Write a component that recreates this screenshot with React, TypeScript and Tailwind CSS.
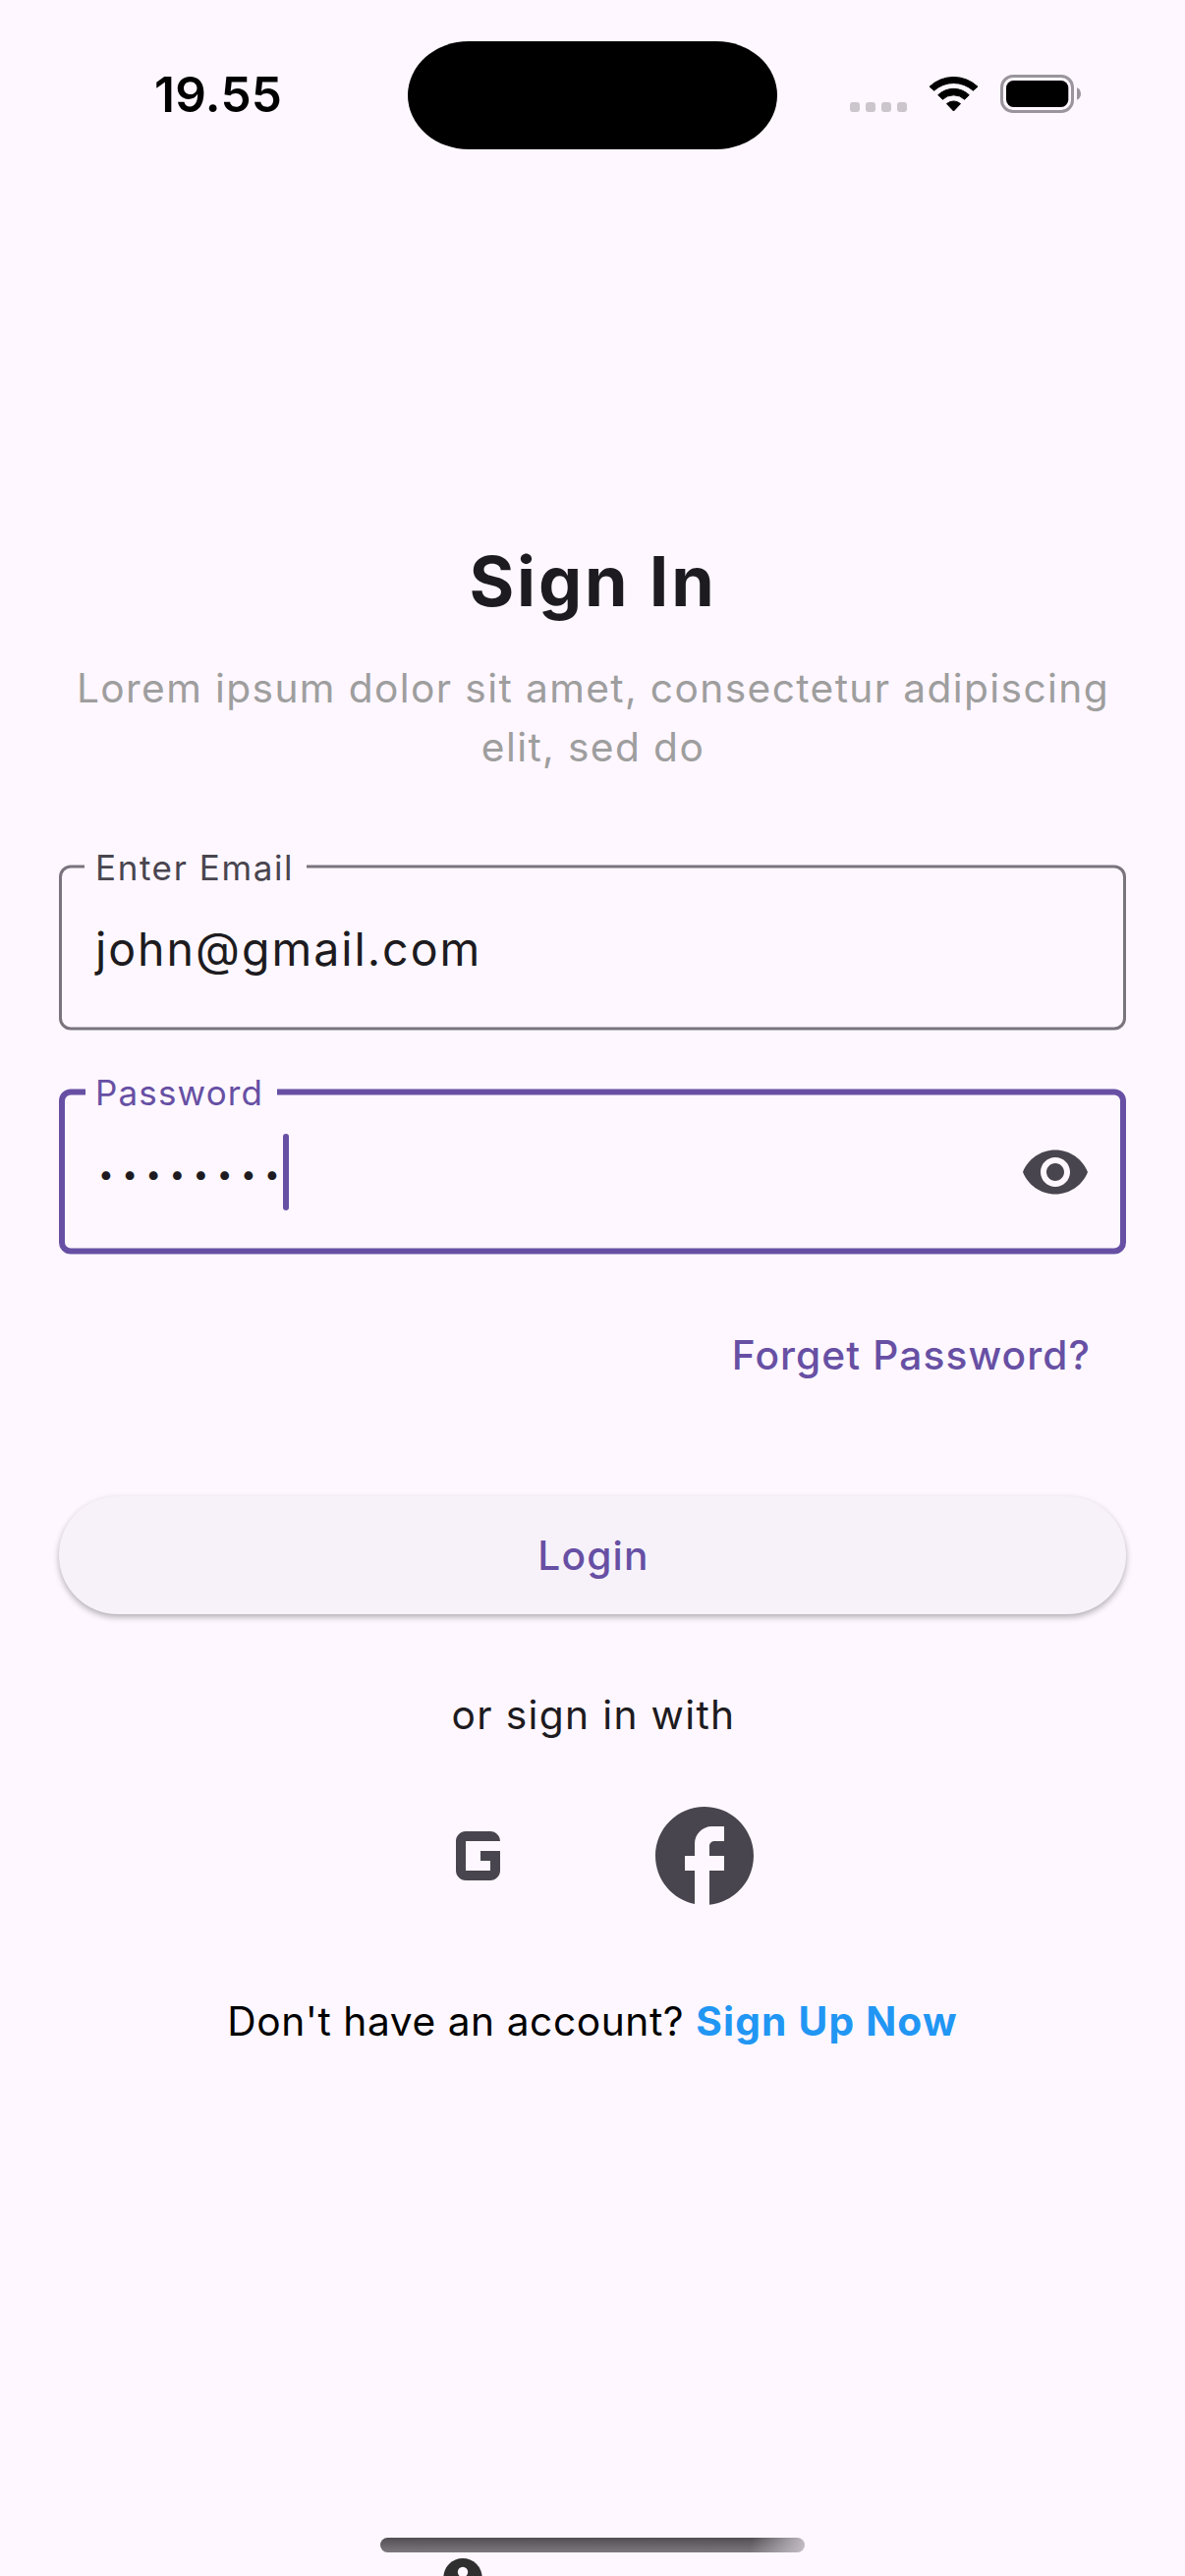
import type { ReactNode } from "react";

function StatusBar() {
  return (
    <header className="flex h-[192px] items-start pl-[157px] text-black">
      <time className="mt-[66px] w-[258px] text-[49.5px] leading-[60px] font-semibold tracking-[0.3px]">19.55</time>
      <div className="mt-[42px] h-[110px] w-[376px] rounded-[62px/55px] bg-black" />
      <div className="mt-[104px] ml-[74px] flex gap-[6px]">
        <span className="size-[10px] rounded-[3px] bg-[#cbc5cc]" />
        <span className="size-[10px] rounded-[3px] bg-[#cbc5cc]" />
        <span className="size-[10px] rounded-[3px] bg-[#cbc5cc]" />
        <span className="size-[10px] rounded-[3px] bg-[#cbc5cc]" />
      </div>
      <svg className="mt-[76px] ml-[22px] h-[39px] w-[51px]" viewBox="0 0 51 39" fill="currentColor" stroke="currentColor" strokeWidth="1" strokeLinejoin="round">
        <path d="M1 12.2A35.6 35.6 0 0 1 50 12.2L45.3 16.2A29.4 29.4 0 0 0 5.7 16.2Z" />
        <path d="M9.7 20.7A22.8 22.8 0 0 1 41.3 20.7L36.6 25.2A16.2 16.2 0 0 0 14.4 25.2Z" />
        <path d="M18.5 29.6A10.6 10.6 0 0 1 32.5 29.6L25.5 37Z" />
      </svg>
      <svg className="mt-[76px] ml-[22px] h-[39px] w-[83px]" viewBox="0 0 83 39">
        <rect x="1.5" y="1.5" width="72" height="36" rx="11.5" fill="none" stroke="#9a959c" strokeWidth="3" />
        <rect x="6" y="6" width="63.3" height="27" rx="7.5" />
        <path d="M78 13.2C83.3 15 83.3 24 78 25.8Z" fill="#9a959c" />
      </svg>
    </header>
  );
}

function Visibility() {
  return (
    <svg viewBox="0 0 24 24" className="ml-auto size-[72px] fill-[#49454f]">
      <path d="M12 4.5C7 4.5 2.73 7.61 1 12c1.73 4.39 6 7.5 11 7.5s9.27-3.11 11-7.5c-1.73-4.39-6-7.5-11-7.5zM12 17c-2.76 0-5-2.24-5-5s2.24-5 5-5 5 2.24 5 5-2.24 5-5 5zm0-8c-1.66 0-3 1.34-3 3s1.34 3 3 3 3-1.34 3-3-1.34-3-3-3z" />
    </svg>
  );
}

function Field({ focused, children }: { focused?: boolean; children: ReactNode }) {
  return (
    <div className="relative flex h-[169px] items-center px-[36px]">
      <div
        className={
          focused
            ? "absolute inset-x-0 top-0 h-[168px] translate-y-[0.5px] rounded-[12px] border-[6px] border-[#6750a4]"
            : "absolute inset-x-0 top-0 h-[168px] translate-y-[0.5px] rounded-[12px] border-[3px] border-[#79747e]"
        }
      />
      {children}
    </div>
  );
}

export default function App() {
  return (
    <div className="flex h-[2622px] w-[1206px] flex-col overflow-hidden bg-[#fef7ff] font-['Inter',sans-serif] text-[#1d1b20]">
      <StatusBar />
      <main className="flex flex-col px-[60px]">
        <h1 className="mt-[357px] pl-[1px] text-center text-[70px] leading-[85px] font-bold tracking-[2.8px]">Sign In</h1>
        <p className="mt-[37px] pl-[1px] text-center text-[40.7px] leading-[60px] tracking-[1.38px] text-[#9e9e9e]">
          Lorem ipsum dolor sit amet, consectetur adipiscing
          <br />
          elit, sed do
        </p>

        <div className="mt-[89px]">
          <Field>
            <label className="absolute top-[-18px] left-[26px] w-[226px] bg-[#fef7ff] pl-[11px] text-[35px] leading-[42px] tracking-[1.6px] whitespace-nowrap text-[#49454f]">
              Enter Email
            </label>
            <span className="pt-[3px] pl-[1px] text-[46.5px] leading-[56px] tracking-[1.98px]">john@gmail.com</span>
          </Field>
        </div>

        <div className="mt-[59px]">
          <Field focused>
            <label className="absolute top-[-17px] left-[27px] w-[195px] bg-[#fef7ff] pl-[10px] text-[35px] leading-[42px] tracking-[1.15px] whitespace-nowrap text-[#6750a4]">
              Password
            </label>
            <span className="w-[192px] pt-[5px] pl-[4px] text-[28px] leading-[34px] tracking-[8.4px] whitespace-nowrap">••••••••</span>
            <span className="h-[78px] w-[6px] rounded-[3px] bg-[#6750a4]" />
            <Visibility />
          </Field>
        </div>

        <a className="mt-[78px] self-end pr-[36px] text-[40.7px] leading-[49px] font-medium tracking-[1.08px] text-[#6750a4]">Forget Password?</a>

        <button className="mt-[119px] h-[120px] rounded-full bg-[#f7f2fa] pl-[2px] text-[40.7px] leading-[49px] font-medium tracking-[1.15px] text-[#6750a4] shadow-[0_3px_6px_rgba(0,0,0,0.3)]">
          Login
        </button>

        <p className="mt-[78px] pl-[2px] text-center text-[40.7px] leading-[49px] tracking-[1.35px]">or sign in with</p>

        <div className="mt-[59px] flex justify-center gap-[108px]">
          <svg viewBox="0 0 120 120" className="size-[120px] fill-[#49454f]">
            <path d="M80 45C80 39.5 75.5 35 70 35H45C39.5 35 35 39.5 35 45v30c0 5.5 4.5 10 10 10h25c5.5 0 10-4.5 10-10V55H60v10h10v10H45V45z" />
          </svg>
          <svg viewBox="0 0 24 24" className="size-[120px] fill-[#49454f]">
            <path d="M22 12c0-5.52-4.48-10-10-10S2 6.48 2 12c0 4.84 3.44 8.87 8 9.8V15H8v-3h2V9.5C10 7.57 11.57 6 13.5 6H16v3h-2c-.55 0-1 .45-1 1v2h3v3h-3v6.95c5.05-.5 9-4.76 9-9.95z" />
          </svg>
        </div>

        <p className="mt-[84px] flex justify-center gap-[12px] text-[40.7px] leading-[49px] text-black">
          <span className="tracking-[0.56px]">Don't have an account?</span>
          <a className="font-bold tracking-[1.2px] text-[#2196f3]">Sign Up Now</a>
        </p>
      </main>

      <footer className="mt-auto flex h-[39px] flex-col">
        <div className="ml-[387px] h-[15px] w-[432px] rounded-full bg-[linear-gradient(100deg,transparent_87%,#c4bdc6_100%),linear-gradient(#524e53,#7c787d)]" />
        <svg viewBox="0 0 40 18" className="mt-[6px] ml-[451px] h-[18px] w-[40px]">
          <circle cx="20" cy="19.7" r="19.7" fill="#2f2f2f" />
          <circle cx="20" cy="14" r="5.2" fill="#fef7ff" />
        </svg>
      </footer>
    </div>
  );
}
